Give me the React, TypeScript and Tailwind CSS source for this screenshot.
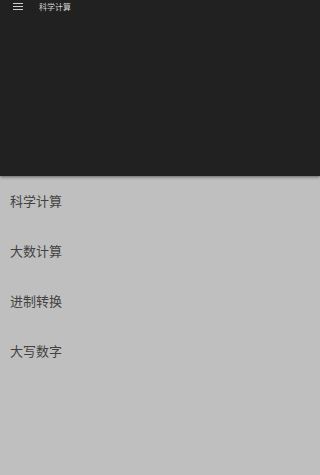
const ITEMS = ['科学计算', '大数计算', '进制转换', '大写数字']

export default function App() {
  return (
    <div
      className="flex h-[475px] w-full flex-col bg-[#bfbfbf]"
      style={{ fontFamily: '"Noto Sans CJK SC", "Noto Sans", sans-serif' }}
    >
      <div className="relative h-[176px] bg-[#212121] shadow-[0_1px_3px_rgba(0,0,0,0.5)]">
        <div className="flex h-[13px] items-center">
          <div className="ml-[13px] flex w-[10px] flex-col gap-[1.5px]">
            <span className="h-[1.5px] bg-[#cfcfcf]" />
            <span className="h-[1.5px] bg-[#cfcfcf]" />
            <span className="h-[1.5px] bg-[#cfcfcf]" />
          </div>
          <span className="ml-[16px] text-[8px] leading-none text-[#d0d0d0]">科学计算</span>
        </div>
      </div>
      <ul className="flex flex-col">
        {ITEMS.map((it) => (
          <li key={it} className="flex h-[50px] items-center px-[10px] text-[13px] text-[#424242]">
            {it}
          </li>
        ))}
      </ul>
    </div>
  )
}
